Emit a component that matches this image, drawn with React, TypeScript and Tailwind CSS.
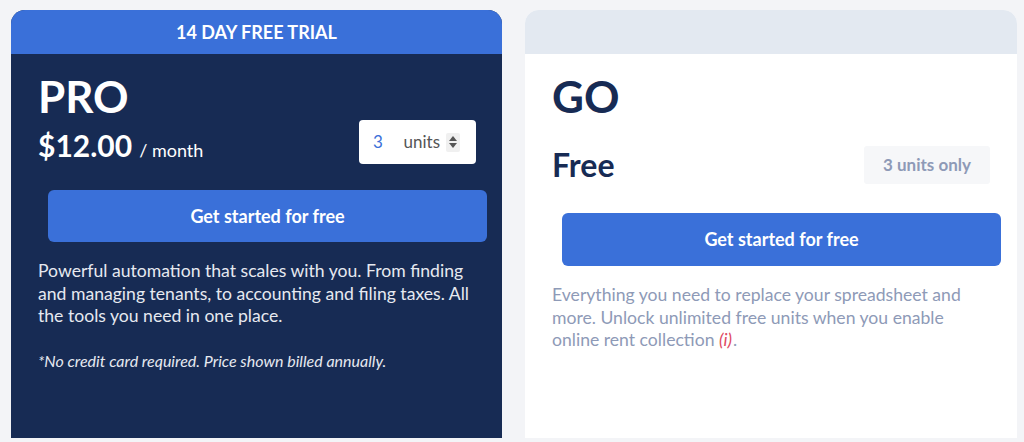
const font = { fontFamily: 'Lato, "Noto Sans", sans-serif' };

function Spinner() {
    return (
        <span className="flex h-[19px] w-[14px] flex-col items-center justify-center rounded-[2px] bg-[#f0f0f0] text-[#555]">
            <svg width="8" height="5" viewBox="0 0 8 5">
                <path d="M4 0L8 5H0z" fill="currentColor" />
            </svg>
            <svg width="8" height="5" viewBox="0 0 8 5" className="mt-[2px]">
                <path d="M0 0h8L4 5z" fill="currentColor" />
            </svg>
        </span>
    );
}

export default function App() {
    return (
        <div className="flex h-[442px] w-full gap-[23px] overflow-hidden bg-[#f3f4f7] pt-[10px] pr-[7px] pl-[11px]" style={font}>
            {/* Pro plan */}
            <div className="flex h-[428px] w-[491px] flex-col overflow-hidden rounded-t-[14px] bg-[#172b54]">
                <div className="flex h-[44px] shrink-0 items-center justify-center bg-[#3a70d9] text-[18px] font-bold text-white">
                    14 DAY FREE TRIAL
                </div>
                <div className="flex flex-col px-[27px]">
                    <h2 className="mt-[20px] text-[44px] leading-none font-bold text-white">PRO</h2>
                    <div className="mt-[2px] flex items-end justify-between">
                        <div className="flex items-baseline gap-[7px] pb-[4px] text-white">
                            <span className="text-[30px] leading-none font-bold">$12.00</span>
                            <span className="text-[18px] leading-none">/ month</span>
                        </div>
                        <div className="mr-[-1px] flex h-[44px] w-[117px] items-center rounded-[4px] bg-white pr-[16px] pl-[14px] text-[17px]">
                            <span className="text-[#3a70d9]">3</span>
                            <span className="mr-[6px] ml-auto text-[#555]">units</span>
                            <Spinner />
                        </div>
                    </div>
                    <button className="mt-[26px] ml-[10px] h-[52px] w-[439px] rounded-[6px] bg-[#3a70d9] text-[18px] font-bold text-white">
                        Get started for free
                    </button>
                    <p className="mt-[18px] text-[17.6px] leading-[22.5px] text-[#e6e9f0]">
                        Powerful automation that scales with you. From finding and managing tenants, to accounting and filing taxes. All the
                        tools you need in one place.
                    </p>
                    <p className="mt-[22px] text-[16px] leading-[22px] text-[#e6e9f0] italic">
                        *No credit card required. Price shown billed annually.
                    </p>
                </div>
            </div>

            {/* Go plan */}
            <div className="flex h-[428px] w-[492px] flex-col overflow-hidden rounded-t-[14px] bg-white">
                <div className="h-[44px] shrink-0 bg-[#e3e9f1]" />
                <div className="flex flex-col px-[27px]">
                    <h2 className="mt-[20px] text-[44px] leading-none font-bold text-[#172b54]">GO</h2>
                    <div className="mt-[28px] flex items-center justify-between">
                        <span className="text-[32px] leading-none font-bold text-[#172b54]">Free</span>
                        <span className="flex h-[38px] w-[126px] items-center justify-center rounded-[3px] bg-[#f6f7f9] text-[17px] font-bold text-[#8e9ab7]">
                            3 units only
                        </span>
                    </div>
                    <button className="mt-[29px] ml-[10px] h-[53px] w-[439px] rounded-[6px] bg-[#3a70d9] text-[18px] font-bold text-white">
                        Get started for free
                    </button>
                    <p className="mt-[18px] text-[17.6px] leading-[22.5px] text-[#8e9ab7]">
                        Everything you need to replace your spreadsheet and more. Unlock unlimited free units when you enable online rent
                        collection <span className="inline-block pr-[1px] text-[#e04a63] italic">(i)</span>.
                    </p>
                </div>
            </div>
        </div>
    );
}
